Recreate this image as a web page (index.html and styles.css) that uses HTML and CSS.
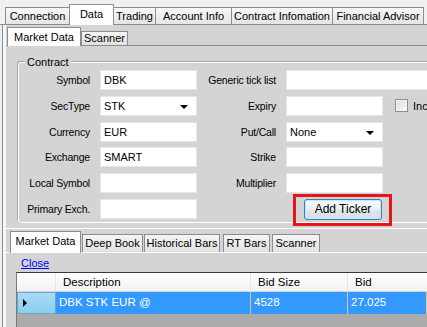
FILE: index.html
```html
<!DOCTYPE html>
<html lang="en">
  <head>
    <meta charset="UTF-8" />
    <meta name="viewport" content="width=device-width, initial-scale=1.0" />
    <title>Data</title>

    <link rel="stylesheet" href="styles.css">
  </head>
  <body>
    <div class="tabbar">
      <div class="tab t-connection">Connection</div>
      <div class="tab t-data active">Data</div>
      <div class="tab t-trading">Trading</div>
      <div class="tab t-account">Account Info</div>
      <div class="tab t-contract">Contract Infomation</div>
      <div class="tab t-fa">Financial Advisor</div>
    </div>

    <div class="page">
      <div class="subtabs upper">
        <div class="subtab s-market active">Market Data</div>
        <div class="subtab s-scanner">Scanner</div>
      </div>

      <div class="panel">
        <fieldset class="group">
          <legend>Contract</legend>
          <div class="form">
            <label>Symbol</label>
            <div class="input">DBK</div>
            <label>Generic tick list</label>
            <div class="input wide"></div>

            <label>SecType</label>
            <div class="input select">STK<span class="arrow"></span></div>
            <label>Expiry</label>
            <div class="input"></div>
            <div class="check"><span class="box"></span>Include expired</div>

            <label>Currency</label>
            <div class="input">EUR</div>
            <label>Put/Call</label>
            <div class="input select">None<span class="arrow"></span></div>
            <div></div>

            <label>Exchange</label>
            <div class="input">SMART</div>
            <label>Strike</label>
            <div class="input"></div>
            <div></div>

            <label>Local Symbol</label>
            <div class="input"></div>
            <label>Multiplier</label>
            <div class="input"></div>
            <div></div>

            <label>Primary Exch.</label>
            <div class="input"></div>
            <div></div>
            <div class="highlight">
              <button class="button">Add Ticker</button>
            </div>
          </div>
        </fieldset>
      </div>

      <div class="subtabs lower">
        <div class="subtab l-market active">Market Data</div>
        <div class="subtab l-deep">Deep Book</div>
        <div class="subtab l-hist">Historical Bars</div>
        <div class="subtab l-rt">RT Bars</div>
        <div class="subtab l-scanner">Scanner</div>
      </div>

      <div class="panel bottom">
        <a class="close" href="#">Close</a>
        <div class="grid">
          <div class="grid-head">
            <div class="cell rowhead"></div>
            <div class="cell c-desc">Description</div>
            <div class="cell c-size">Bid Size</div>
            <div class="cell c-bid">Bid</div>
          </div>
          <div class="grid-row selected">
            <div class="cell rowhead"><span class="pointer"></span></div>
            <div class="cell c-desc">DBK STK EUR @</div>
            <div class="cell c-size">4528</div>
            <div class="cell c-bid">27.025</div>
          </div>
        </div>
      </div>
    </div>
  </body>
</html>
```

FILE: styles.css
```css
* {
  margin: 0;
  padding: 0;
  box-sizing: border-box;
}

body {
  width: 427px;
  height: 327px;
  overflow: hidden;
  background-color: #f0f0f0;
  font-family: "Liberation Sans", Arial, sans-serif;
  font-size: 11px;
  color: #000;
}

/* main tab strip */

.tabbar {
  display: flex;
  align-items: flex-end;
  height: 25px;
  padding-left: 5px;
  border-bottom: 1px solid #898c95;
}

.tab {
  height: 17px;
  margin-right: -1px;
  line-height: 16px;
  text-align: center;
  white-space: nowrap;
  border: solid 1px #898c95;
  border-bottom: none;
  background: linear-gradient(#f7f7f7, #e5e5e5);
}

.tab.active {
  position: relative;
  height: 21px;
  margin-bottom: -1px;
  padding-top: 1px;
  background: #fff;
}

.t-connection { width: 65px; }
.t-data { width: 45px; }
.t-trading { width: 43px; }
.t-account { width: 77px; }
.t-contract { width: 102px; }
.t-fa { width: 92px; }

/* tab page */

.page {
  height: 302px;
  margin-left: 2px;
  padding-left: 3px;
  border-left: solid 1px #898c95;
  background-color: #f7f7f7;
}

.subtabs {
  display: flex;
  align-items: flex-end;
  height: 20px;
  background-color: #d4d4d4;
}

.subtabs.upper {
  padding-left: 1px;
}

.subtabs.lower {
  height: 24px;
  padding-left: 4px;
  border-top: solid 1px #fff;
}

.subtab {
  height: 14px;
  line-height: 13px;
  text-align: center;
  white-space: nowrap;
  border: solid 1px #898c95;
  border-bottom: none;
  background: linear-gradient(#f5f5f5, #e1e1e1);
}

.subtab.active {
  height: 19px;
  margin-bottom: -1px;
  padding-top: 2px;
  line-height: 14px;
  background: #fff;
}

.lower .subtab {
  height: 18px;
  line-height: 17px;
}

.lower .subtab.active {
  height: 22px;
  padding-top: 2px;
  line-height: 15px;
}

.s-market { width: 74px; }
.s-scanner { width: 47px; }

.l-market { width: 71px; }
.l-deep { width: 61px; margin-left: 1px; }
.l-hist { width: 76px; margin-left: 1px; }
.l-rt { width: 47px; margin-left: 3px; }
.l-scanner { width: 48px; margin-left: 2px; }

.panel {
  height: 183px;
  padding: 10px 0 0 12px;
  overflow: hidden;
  border-top: solid 1px #898c95;
  background-color: #d4d4d4;
}

/* contract group */

.group {
  width: 440px;
  height: 167px;
  padding: 0;
  border: solid 1px #fff;
  border-radius: 3px;
  box-shadow: -1px -1px 0 #a8a8a8;
}

.group legend {
  margin-left: 6px;
  padding: 0 2px;
  line-height: 13px;
  background-color: #d4d4d4;
}

.form {
  display: grid;
  grid-template-columns: 81px 97px 89px 97px 1fr;
  grid-template-rows: repeat(6, 20px);
  row-gap: 5.8px;
  margin-top: 1px;
}

.form label {
  align-self: center;
  padding-right: 10px;
  text-align: right;
  white-space: nowrap;
  font-size: 10.5px;
  letter-spacing: -0.2px;
}

.input {
  position: relative;
  height: 20px;
  padding-left: 3px;
  line-height: 19px;
  background-color: #fff;
  border: solid 1px #e4e6ea;
}

.input.wide {
  grid-column: span 2;
}

.arrow {
  position: absolute;
  right: 8px;
  top: 8px;
  border-left: 4px solid transparent;
  border-right: 4px solid transparent;
  border-top: 4px solid #000;
}

.check {
  display: flex;
  align-items: center;
  gap: 5px;
  padding-left: 12px;
  white-space: nowrap;
}

.box {
  width: 13px;
  height: 13px;
  border: solid 1px #8f8f8f;
  background: linear-gradient(135deg, #dcdcdc, #fbfbfb);
  box-shadow: inset 0 0 0 1px #f4f4f4;
}

.highlight {
  width: 99px;
  height: 32px;
  margin: -5px 0 0 7px;
  padding: 2px 7px 3px 8px;
  border: solid 3px #e8141c;
}

.button {
  width: 78px;
  height: 21px;
  font-family: inherit;
  font-size: 12px;
  color: #000;
  border: solid 1px #3c7fb1;
  border-radius: 3px;
  background: linear-gradient(#f7fafc, #ebeff2 50%, #e0e6ea 51%, #d8dfe4);
  box-shadow: inset 0 0 0 1px #bfeafc;
}

/* market data grid */

.panel.bottom {
  height: 75px;
  padding: 3px 0 0 10px;
  border-top: solid 1px #fff;
}

.close {
  display: block;
  margin-left: 5px;
  line-height: 14px;
  color: #0000ff;
}

.grid {
  margin-top: 2px;
  height: 60px;
  border-top: solid 1px #3a3a3a;
  border-left: solid 1px #7a7a7a;
  background-color: #ababab;
}

.grid-head,
.grid-row {
  display: flex;
}

.grid-head {
  height: 19px;
  background: linear-gradient(#ffffff, #f1f2f4);
  border-bottom: solid 1px #d5d5d5;
}

.grid-row {
  height: 22px;
}

.cell {
  padding-left: 7px;
  line-height: 18px;
  font-size: 11.5px;
  white-space: nowrap;
  border-right: solid 1px #e4e4e4;
}

.rowhead {
  position: relative;
  width: 39px;
  padding: 0;
}

.c-desc { width: 195px; }
.c-size { width: 97px; }
.c-bid { flex: 1; border-right: none; }

.grid-row.selected {
  color: #fff;
  background-color: #3399ff;
}

.grid-row .cell {
  padding-left: 3px;
  line-height: 21px;
  border-right: solid 1px #d8c4a4;
}

.grid-row .rowhead {
  padding: 0;
  background: linear-gradient(#a8dbf6, #8ccdf0);
  border: solid 1px #6fa5c4;
}

.pointer {
  position: absolute;
  left: 5px;
  top: 6px;
  border-top: 4px solid transparent;
  border-bottom: 4px solid transparent;
  border-left: 4px solid #000;
}
```
